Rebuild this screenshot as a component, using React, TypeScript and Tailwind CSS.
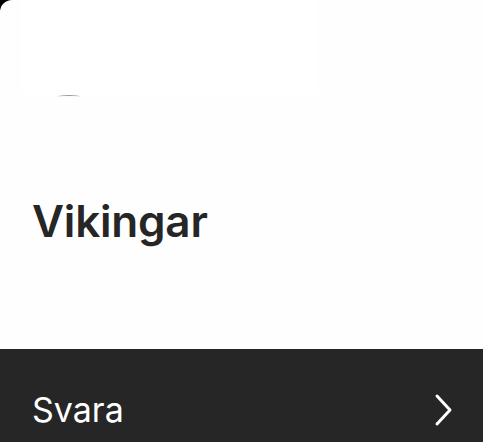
import React from "react";

export default function App() {
  return (
    <div className="w-[483px] h-[442px] bg-black overflow-hidden" style={{ fontFamily: "Inter, 'Noto Sans', sans-serif" }}>
      <div className="w-full h-full rounded-tl-[12px] bg-[#fefefe] flex flex-col overflow-hidden">
        <div className="h-[349px] flex flex-col">
          <div className="ml-[21px] w-[296px] h-[95px] bg-white" />
          <div className="ml-[58px] w-[22px] h-[3px] rounded-[50%] border-t border-[#9a9a9a]" />
          <h1 className="ml-[32px] mt-[101px] text-[44px] font-semibold leading-none text-[#262626] tracking-[-0.2px]">Vikingar</h1>
        </div>
        <div className="flex-1 bg-[#262626] flex items-start justify-between pl-[32px] pr-[28px] pt-[44px]">
          <span className="text-[34px] text-white leading-none">Svara</span>
          <svg width="22" height="34" viewBox="0 0 22 34" fill="none">
            <path d="M4 3 L17 17 L4 31" stroke="white" strokeWidth="3" strokeLinecap="round" strokeLinejoin="round" />
          </svg>
        </div>
      </div>
    </div>
  );
}
